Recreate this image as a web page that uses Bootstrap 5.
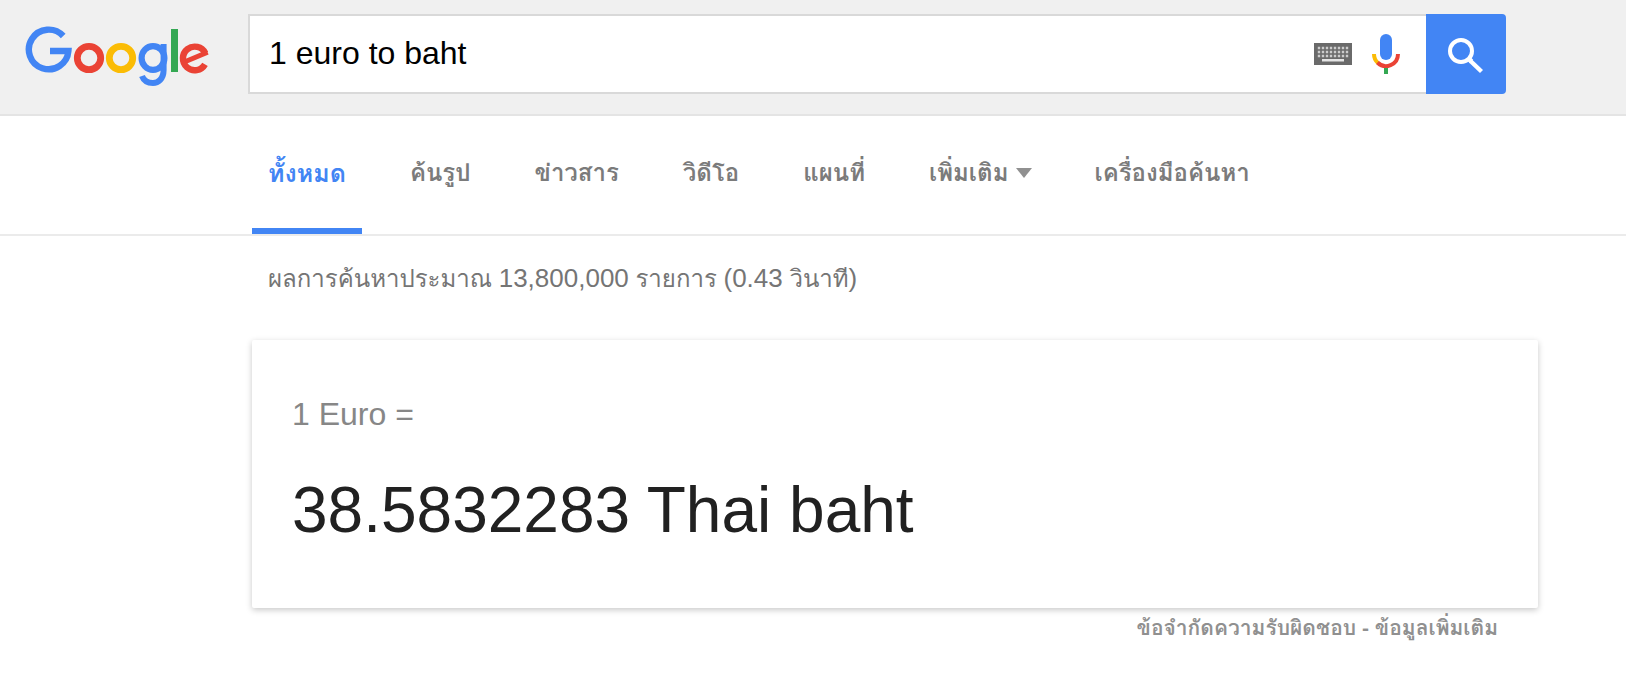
<!DOCTYPE html>
<html lang="th">
<head>
<meta charset="utf-8">
<meta name="viewport" content="width=device-width, initial-scale=1">
<title>1 euro to baht</title>
<link rel="stylesheet" href="https://cdn.jsdelivr.net/npm/bootstrap@5.3.0/dist/css/bootstrap.min.css">
<style>
  body { font-family: "Liberation Sans", "Loma", "Garuda", "Waree", "Noto Sans Thai Looped", "Noto Sans Thai", sans-serif; background: #fff; color: #212121; }
  .topbar { background: #f0f0f0; border-bottom: 2px solid #e4e4e4; padding: 14px 120px 20px 24px; }
  .brand { width: 224px; padding-top: 4px; line-height: 0; }
  .searchbox { height: 80px; background: #fff; border: 2px solid #d9d9d9; border-right: 0; padding: 0 22px 0 19px; }
  .searchbox input { font-size: 32px; line-height: 40px; color: #000; background: transparent; height: 72px; margin-bottom: 2px; }
  .searchbox input:focus { outline: 0; }
  .icon-btn { line-height: 0; }
  .go { width: 80px; height: 80px; background: #4285f4; border-radius: 0 4px 4px 0; line-height: 0; }
  .tabs { border-bottom: 2px solid #ebebeb; padding-left: 252px; gap: 32px; }
  .tabs a, .tabs button { height: 118px; padding: 2px 16px 0; border: 0; border-bottom: 6px solid transparent; background: none; color: #7b7b7b; font-size: 24px; line-height: 36px; font-weight: 700; text-decoration: none; white-space: nowrap; }
  .tabs a.active { color: #4285f4; border-bottom-color: #4285f4; font-size: 25px; }
  .tabs .more { padding-right: 14px; }
  .tri { border: 8px solid transparent; border-top: 10px solid #909090; border-bottom: 0; }
  .results { padding: 22px 88px 24px 252px; }
  .stats { font-size: 24px; line-height: 40px; font-weight: 500; color: #757575; padding-left: 16px; margin-bottom: 41px; }
  .figures { font-size: 26px; }
  .answer { padding: 50px 40px 58px; border-radius: 2px; box-shadow: 0 2px 6px rgba(0,0,0,.22); background: #fff; }
  .from { font-size: 32px; line-height: 48px; color: #878787; margin-bottom: 32px; }
  .to { font-size: 64px; line-height: 80px; }
  .notes { font-size: 21px; line-height: 40px; font-weight: 700; padding-right: 40px; color: #909090; }
  .notes a { color: inherit; text-decoration: none; }
</style>
</head>
<body>
<header class="topbar d-flex align-items-center">
  <a class="brand flex-shrink-0" href="#" aria-label="Google">
    <svg width="188" height="64" viewBox="24 24 188 64" fill="none" stroke-width="6.8">
      <path stroke="#4285f4" stroke-width="6.400" d="M63.200 36A19.800 19.800 0 1 0 68.400 51H50"/>
      <circle stroke="#ea4335" cx="89" cy="58" r="11.7"/>
      <circle stroke="#fbbc05" cx="121" cy="58" r="11.7"/>
      <path stroke="#4285f4" stroke-width="6" d="M163.600 44V70C163.600 79 158 83 153 83C147 83 143.500 80 142 76"/>
      <ellipse stroke="#4285f4" stroke-width="6.2" cx="153" cy="58" rx="11.4" ry="11.9"/>
      <path stroke="#34a853" stroke-width="7" d="M174.500 29V72"/>
      <path stroke="#ea4335" stroke-width="6.400" d="M205 64.300A11.8 11.8 0 1 1 205.300 53.200"/>
      <path stroke="#ea4335" stroke-width="5" d="M185.500 61.500L207.600 52.200"/>
    </svg>
  </a>
  <form class="d-flex flex-grow-1" role="search">
    <div class="searchbox d-flex align-items-center flex-grow-1">
      <input class="border-0 p-0 flex-grow-1" type="text" aria-label="ค้นหา" value="1 euro to baht">
      <button class="icon-btn btn border-0 p-0 me-3" type="button" aria-label="แป้นพิมพ์">
        <svg width="38" height="22" viewBox="0 0 38 22">
          <path fill="#6a6a6a" d="M0 0H38V22H0z"/>
          <path stroke="#ccc" stroke-width="2.400" stroke-dasharray="2.400 1.600" d="M3.800 5H35M3.800 9H35M3.800 13H35"/>
          <path fill="#e4e4e4" d="M8 16H30V18.500H8z"/>
        </svg>
      </button>
      <button class="icon-btn btn border-0 p-0" type="button" aria-label="ค้นหาด้วยเสียง">
        <svg width="36" height="42" viewBox="1368 33 36 42" fill="none" stroke-width="4">
          <rect fill="#4285f4" x="1380" y="34" width="12" height="26" rx="6"/>
          <path stroke="#fbbc05" d="M1374 54A12 12 0 0 0 1378 63"/>
          <path stroke="#ea4335" d="M1377.500 62.500A12 12 0 0 0 1398 54"/>
          <path stroke="#34a853" d="M1386 68V74"/>
        </svg>
      </button>
    </div>
    <button class="go btn border-0 p-0" type="submit" aria-label="ค้นหา">
      <svg width="80" height="80" viewBox="1426 14 80 80" fill="none" stroke="#fff">
        <circle cx="1461" cy="51" r="11" stroke-width="4"/>
        <path stroke-width="4.800" d="M1468.500 58.500L1471.500 61.500"/>
        <path stroke-width="4.400" stroke-linejoin="round" d="M1470.500 61L1481.500 71.500"/>
      </svg>
    </button>
  </form>
</header>
<nav class="tabs d-flex">
  <a class="active d-flex align-items-center" href="#" aria-current="page">ทั้งหมด</a>
  <a class="d-flex align-items-center" href="#">ค้นรูป</a>
  <a class="d-flex align-items-center" href="#">ข่าวสาร</a>
  <a class="d-flex align-items-center" href="#">วิดีโอ</a>
  <a class="d-flex align-items-center" href="#">แผนที่</a>
  <button class="more d-flex align-items-center gap-2" type="button">เพิ่มเติม<span class="tri"></span></button>
  <button class="d-flex align-items-center" type="button">เครื่องมือค้นหา</button>
</nav>
<main class="results">
  <p class="stats">ผลการค้นหาประมาณ <span class="figures">13,800,000</span> รายการ <span class="figures">(0.43</span> วินาที<span class="figures">)</span></p>
  <section class="answer">
    <div class="from">1 Euro =</div>
    <div class="to">38.5832283 Thai baht</div>
  </section>
  <div class="notes text-end"><a href="#">ข้อจำกัดความรับผิดชอบ</a> - <a href="#">ข้อมูลเพิ่มเติม</a></div>
</main>
<script src="https://cdn.jsdelivr.net/npm/bootstrap@5.3.0/dist/js/bootstrap.bundle.min.js"></script>
</body>
</html>
